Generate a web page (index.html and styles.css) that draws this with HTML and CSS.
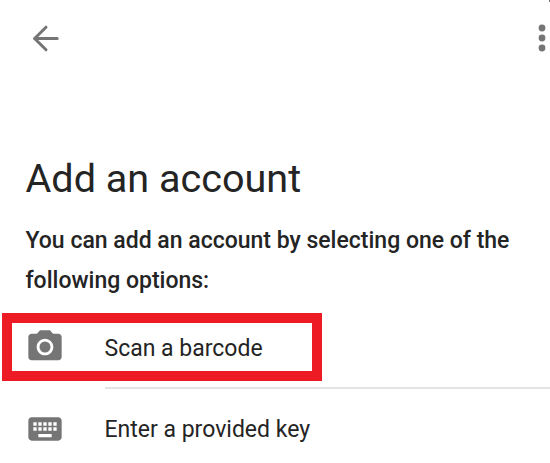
FILE: index.html
```html
<!DOCTYPE html>
<html lang="en">
<head>
    <meta charset="UTF-8">
    <meta name="viewport" content="width=device-width, initial-scale=1.0">
    <title>Add an account</title>
    <link rel="stylesheet" href="styles.css">
</head>
<body>

<header class="toolbar">
    <button class="icon-button" aria-label="Back">
        <svg class="back-icon" viewBox="0 0 27 27"><path d="M25.2 13.5H2.5M14 2.2L2.6 13.5 14 24.8"/></svg>
    </button>
    <button class="icon-button" aria-label="More options">
        <svg class="more-icon" viewBox="0 0 8 28"><circle cx="4" cy="4" r="3.4"/><circle cx="4" cy="14" r="3.4"/><circle cx="4" cy="24" r="3.4"/></svg>
    </button>
    <span class="corner-mark"></span>
</header>

<main>
    <h1>Add an account</h1>
    <p class="intro">You can add an account by selecting one of the<br>following options:</p>

    <ul class="options">
        <li class="option highlighted">
            <svg class="option-icon" viewBox="0 0 24 24"><path d="M9 2L7.17 4H4c-1.1 0-2 .9-2 2v12c0 1.1.9 2 2 2h16c1.1 0 2-.9 2-2V6c0-1.1-.9-2-2-2h-3.17L15 2H9zm3 15c-2.76 0-5-2.24-5-5s2.24-5 5-5 5 2.24 5 5-2.24 5-5 5z"/><circle cx="12" cy="12" r="3.3"/></svg>
            <span>Scan a barcode</span>
        </li>
        <li class="divider"></li>
        <li class="option">
            <svg class="option-icon" viewBox="0 0 24 24"><path d="M20 5H4c-1.1 0-1.99.9-1.99 2L2 17c0 1.1.9 2 2 2h16c1.1 0 2-.9 2-2V7c0-1.1-.9-2-2-2zm-9 3h2v2h-2V8zm0 3h2v2h-2v-2zM8 8h2v2H8V8zm0 3h2v2H8v-2zm-1 2H5v-2h2v2zm0-3H5V8h2v2zm9 7H8v-2h8v2zm0-4h-2v-2h2v2zm0-3h-2V8h2v2zm3 3h-2v-2h2v2zm0-3h-2V8h2v2z"/></svg>
            <span>Enter a provided key</span>
        </li>
    </ul>
</main>

</body>
</html>
```

FILE: styles.css
```css
* {
    box-sizing: border-box;
}

body {
    margin: 0;
    height: 463px;
    overflow: hidden;
    background-color: #fff;
    color: #242424;
    font-family: Roboto, sans-serif;
}

.toolbar {
    position: relative;
    display: flex;
    justify-content: space-between;
    align-items: center;
    height: 76px;
    padding: 0 4px 0 32px;
}

.icon-button {
    display: flex;
    padding: 0;
    border: none;
    background: none;
}

svg {
    display: block;
    fill: #757575;
}

.back-icon {
    width: 27px;
    height: 27px;
    fill: none;
    stroke: #757575;
    stroke-width: 3;
    stroke-linecap: round;
    stroke-linejoin: round;
}

.more-icon {
    width: 8px;
    height: 28px;
}

.corner-mark {
    position: absolute;
    top: 0;
    right: 0;
    width: 1px;
    height: 2px;
    background-color: #757575;
}

h1 {
    margin: 79px 0 0 25.5px;
    font-size: 39.6px;
    font-weight: 400;
    line-height: 48px;
    white-space: nowrap;
}

.intro {
    margin: 18px 0 0 25.5px;
    font-size: 23px;
    font-weight: 500;
    line-height: 40px;
    white-space: nowrap;
}

.options {
    margin: 12px 0 0;
    padding: 0 0 0 2px;
    list-style: none;
}

.option {
    display: flex;
    align-items: center;
    height: 81px;
    padding-left: 23px;
    font-size: 23px;
    white-space: nowrap;
}

.option-icon {
    width: 40px;
    height: 40px;
    margin: 0 39.5px 2px 0;
}

.highlighted {
    width: 320px;
    height: 68px;
    padding-top: 2px;
    padding-left: 13px;
    border: 10px solid #ed1c24;
}

.divider {
    height: 2px;
    margin: 6px 0 0 103px;
    background-color: #e4e4e4;
}
```
